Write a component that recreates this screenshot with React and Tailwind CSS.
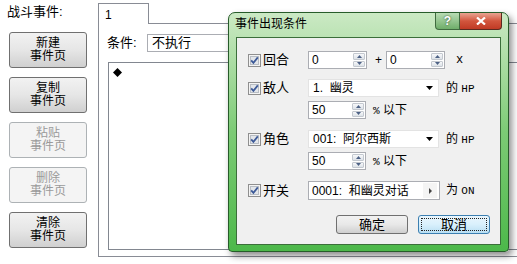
import React from 'react'

const CJK = "font-['Liberation_Sans','Noto_Sans_CJK_SC',sans-serif]"
const MONO = "font-['Liberation_Mono',monospace]"

function SideButton({ top, bottom, disabled }) {
  return (
    <div
      className={
        'flex h-[36px] w-[78px] flex-col items-center justify-center rounded-[3px] border text-[12px] leading-[13px] ' +
        (disabled
          ? 'border-[#adb2b5] bg-[#f4f4f4] text-[#9a9a9a]'
          : 'border-[#707070] bg-linear-to-b from-[#f2f2f2] via-[#e6e6e6] to-[#d0d0d0] text-black')
      }
    >
      <span>{top}</span>
      <span>{bottom}</span>
    </div>
  )
}

function Check({ label }) {
  return (
    <div className="flex w-[60px] items-center">
      <svg width="13" height="13" viewBox="0 0 13 13">
        <rect x="0.5" y="0.5" width="12" height="12" fill="#f4f4f4" stroke="#8f8f8f" />
        <rect x="2.5" y="2.5" width="8" height="8" fill="#e3e6ea" stroke="#b8bdc4" />
        <path d="M3.2 6.4 L5.4 8.8 L9.8 3.4" fill="none" stroke="#3d5a98" strokeWidth="1.8" />
      </svg>
      <span className="ml-[2px] text-[13px]">{label}</span>
    </div>
  )
}

function Spin({ value, w = 'w-[59px]' }) {
  return (
    <div className={'flex h-[18px] items-stretch border border-[#abadb3] bg-white ' + w}>
      <span className="flex-1 pl-[3px] text-[12px] leading-[16px]">{value}</span>
      <div className="m-[1px] flex w-[12px] flex-col gap-[1px]">
        <div className="flex flex-1 items-center justify-center rounded-[1px] border border-[#c3c8cf] bg-linear-to-b from-[#f7f8fa] to-[#dde2e8]">
          <svg width="5" height="3" viewBox="0 0 5 3"><path d="M0 3 L2.5 0 L5 3 Z" fill="#4d6185" /></svg>
        </div>
        <div className="flex flex-1 items-center justify-center rounded-[1px] border border-[#c3c8cf] bg-linear-to-b from-[#f7f8fa] to-[#dde2e8]">
          <svg width="5" height="3" viewBox="0 0 5 3"><path d="M0 0 L2.5 3 L5 0 Z" fill="#4d6185" /></svg>
        </div>
      </div>
    </div>
  )
}

function Dropdown({ children }) {
  return (
    <div className="flex h-[18px] w-[131px] items-center border border-[#e3e3e3] bg-white">
      <span className="flex-1 pl-[4px] text-[12px] leading-[16px] whitespace-pre">{children}</span>
      <svg className="mr-[5px]" width="7" height="4" viewBox="0 0 7 4"><path d="M0 0 L7 0 L3.5 4 Z" fill="#000" /></svg>
    </div>
  )
}

function WinButton({ label, focused }) {
  return (
    <div
      className={
        'flex h-[19px] w-[72px] items-center justify-center rounded-[3px] border text-[13px] ' +
        (focused
          ? 'border-[#3c7fb1] bg-linear-to-b from-[#eaf6fd] via-[#d9f0fc] to-[#b9dff3] p-[2px]'
          : 'border-[#707070] bg-linear-to-b from-[#f2f2f2] via-[#e8e8e8] to-[#cfcfcf]')
      }
    >
      {focused ? (
        <div className="flex h-full w-full items-center justify-center border border-dotted border-[#222]">{label}</div>
      ) : (
        label
      )}
    </div>
  )
}

export default function App() {
  return (
    <div className={'relative h-[264px] w-[517px] overflow-hidden bg-white text-black ' + CJK}>
      <div className="flex h-full">
        {/* left column */}
        <div className="flex w-[98px] shrink-0 flex-col pl-[9px]">
          <div className="mt-[4px] -ml-[2px] h-[22px] text-[13px] leading-[16px]">战斗事件:</div>
          <div className="mt-[6px] flex flex-col gap-[9px]">
            <SideButton top="新建" bottom="事件页" />
            <SideButton top="复制" bottom="事件页" />
            <SideButton top="粘贴" bottom="事件页" disabled />
            <SideButton top="删除" bottom="事件页" disabled />
            <SideButton top="清除" bottom="事件页" />
          </div>
        </div>

        {/* event page panel */}
        <div className="flex w-[430px] shrink-0 flex-col pt-[3px]">
          <div className="relative z-10 -mb-[1px] h-[21px] w-[51px] border border-b-0 border-[#898c95] bg-white pl-[6px] pt-[2px] text-[12px]">
            1
          </div>
          <div className="flex h-[234px] flex-col border border-[#898c95] bg-white pl-[8px] pr-[8px]">
            <div className="mt-[10px] flex h-[18px] items-center">
              <span className="w-[40px] text-[13px]">条件:</span>
              <div className="flex h-[18px] w-[200px] items-center border border-[#abadb3] pl-[4px] text-[13px]">不执行</div>
            </div>
            <div className="mt-[10px] mb-[6px] ml-[1px] flex-1 border border-[#828790] bg-white">
              <svg className="ml-[4px] mt-[5px]" width="9" height="9" viewBox="0 0 9 9">
                <path d="M4.5 0 L9 4.5 L4.5 9 L0 4.5 Z" fill="#000" />
              </svg>
            </div>
          </div>
        </div>
      </div>

      {/* dialog window */}
      <div className="absolute left-[228px] top-[12px] flex h-[240px] w-[281px] flex-col rounded-t-[7px] rounded-b-[4px] border border-[#275c2a] bg-linear-to-b from-[#cbe9c4] via-[#7ccb75] to-[#4cb84a] shadow-[3px_4px_7px_rgba(0,0,0,0.45)]">
        <div className="flex h-[24px] items-start">
          <span className="ml-[6px] mt-[3px] text-[12px] leading-[16px]">事件出现条件</span>
          <div className="ml-auto mr-[6px] flex">
            <div className="flex h-[17px] w-[25px] items-center justify-center rounded-bl-[4px] border border-t-0 border-[#3f6a3f] bg-linear-to-b from-[#b9dcb4] to-[#6fae6a] text-[12px] font-bold text-white [text-shadow:0_0_2px_#1f3f1f]">
              ?
            </div>
            <div className="flex h-[17px] w-[42px] items-center justify-center rounded-br-[4px] border border-l-0 border-t-0 border-[#5a2a20] bg-linear-to-b from-[#e8a392] via-[#d2553d] to-[#c03a24] text-[12px] font-bold text-white [text-shadow:0_0_2px_#5a1a10]">
              <svg width="10" height="8" viewBox="0 0 10 8"><path d="M1 0.5 L9 7.5 M9 0.5 L1 7.5" stroke="#fff" strokeWidth="2.2" /></svg>
            </div>
          </div>
        </div>
        <div className="mx-[7px] mb-[6px] flex flex-1 flex-col border border-[#3b6e3a] bg-[#f0f0f0] pl-[11px] pt-[13px] text-[12px]">
          <div className="flex h-[18px] items-center">
            <Check label="回合" />
            <Spin value="0" />
            <span className="ml-[8px] w-[11px]">+</span>
            <Spin value="0" />
            <span className={'ml-[11px] text-[12px] ' + MONO}>x</span>
          </div>
          <div className="mt-[10px] flex h-[18px] items-center">
            <Check label="敌人" />
            <Dropdown>1.  幽灵</Dropdown>
            <span className="ml-[7px]">的 <span className={'text-[11px] ' + MONO}>HP</span></span>
          </div>
          <div className="mt-[4px] flex h-[18px] items-center pl-[60px]">
            <Spin value="50" w="w-[58px]" />
            <span className="ml-[7px]"><span className={'text-[11px] ' + MONO}>%</span> 以下</span>
          </div>
          <div className="mt-[11px] flex h-[18px] items-center">
            <Check label="角色" />
            <Dropdown>001:  阿尔西斯</Dropdown>
            <span className="ml-[7px]">的 <span className={'text-[11px] ' + MONO}>HP</span></span>
          </div>
          <div className="mt-[4px] flex h-[18px] items-center pl-[60px]">
            <Spin value="50" w="w-[58px]" />
            <span className="ml-[7px]"><span className={'text-[11px] ' + MONO}>%</span> 以下</span>
          </div>
          <div className="mt-[11px] flex h-[19px] items-center">
            <Check label="开关" />
            <div className="flex h-[19px] w-[132px] items-center border border-[#abadb3] bg-white">
              <span className="flex-1 pl-[3px] whitespace-pre">0001:  和幽灵对话</span>
              <div className="mr-[2px] flex h-[15px] w-[14px] items-center justify-center bg-[#f4f4f4]">
                <svg width="3" height="6" viewBox="0 0 3 6"><path d="M0 0 L3 3 L0 6 Z" fill="#444" /></svg>
              </div>
            </div>
            <span className="ml-[6px]">为 <span className={'text-[11px] ' + MONO}>ON</span></span>
          </div>
          <div className="mt-[15px] flex h-[19px] items-center gap-[10px] pl-[88px]">
            <WinButton label="确定" />
            <WinButton label="取消" focused />
          </div>
        </div>
      </div>
    </div>
  )
}
